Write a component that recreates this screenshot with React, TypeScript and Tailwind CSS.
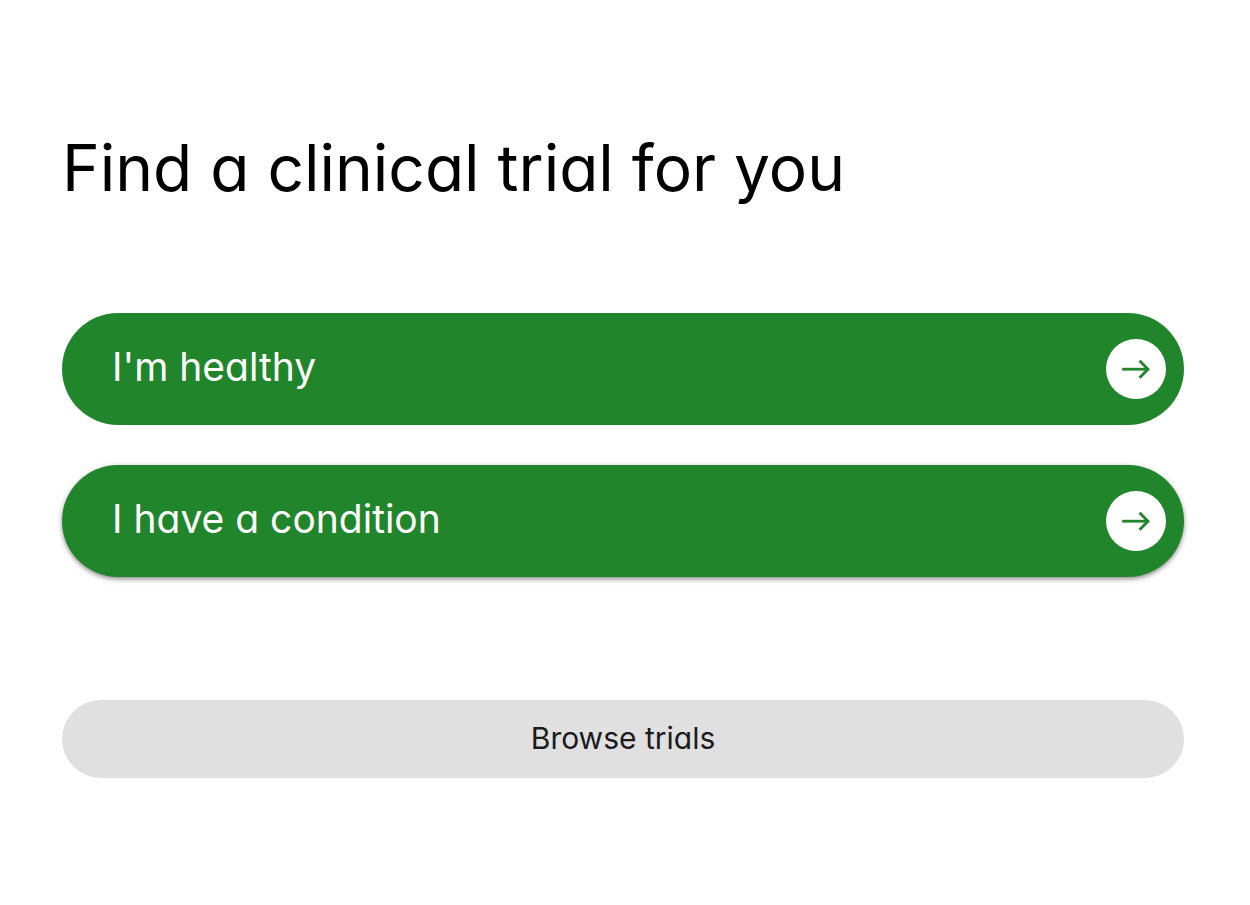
const options = [
  { label: "I'm healthy", style: "" },
  {
    label: "I have a condition",
    style: "shadow-[0_2px_4px_rgba(0,0,0,0.4),0_2px_10px_rgba(0,0,0,0.08)]",
  },
];

const ArrowIcon = () => {
  return (
    <svg
      viewBox="0 0 28 20"
      className="h-5 w-7"
      fill="none"
      stroke="#21862b"
      strokeWidth="2.8"
      aria-hidden="true"
    >
      <path d="M0.2 10.2H26" />
      <path d="M17.6 1.7L26 10.2L17.6 18.7" />
    </svg>
  );
};

const App = () => {
  return (
    <main className="min-h-screen bg-white pt-32 pr-[66px] pb-32 pl-[62px] font-['Inter',sans-serif] [font-feature-settings:'cv11']">
      <h1 className="text-[64px] leading-[80px] text-black">
        Find a clinical trial for you
      </h1>

      <div className="mt-[105px] flex flex-col gap-10">
        {options.map((item) => (
          <button
            key={item.label}
            className={`flex h-28 w-full items-center justify-between rounded-full bg-[#21862b] pr-[18px] pl-[50px] text-left text-[39px] text-white ${item.style}`}
          >
            <span className="pb-1">{item.label}</span>
            <span className="flex size-[60px] items-center justify-center rounded-full bg-white">
              <ArrowIcon />
            </span>
          </button>
        ))}
      </div>

      <button className="mt-[123px] h-[78px] w-full rounded-full bg-[#e0e0e0] pb-0.5 text-[30px] text-[#1b1b1b]">
        Browse trials
      </button>
    </main>
  );
};
export default App;
